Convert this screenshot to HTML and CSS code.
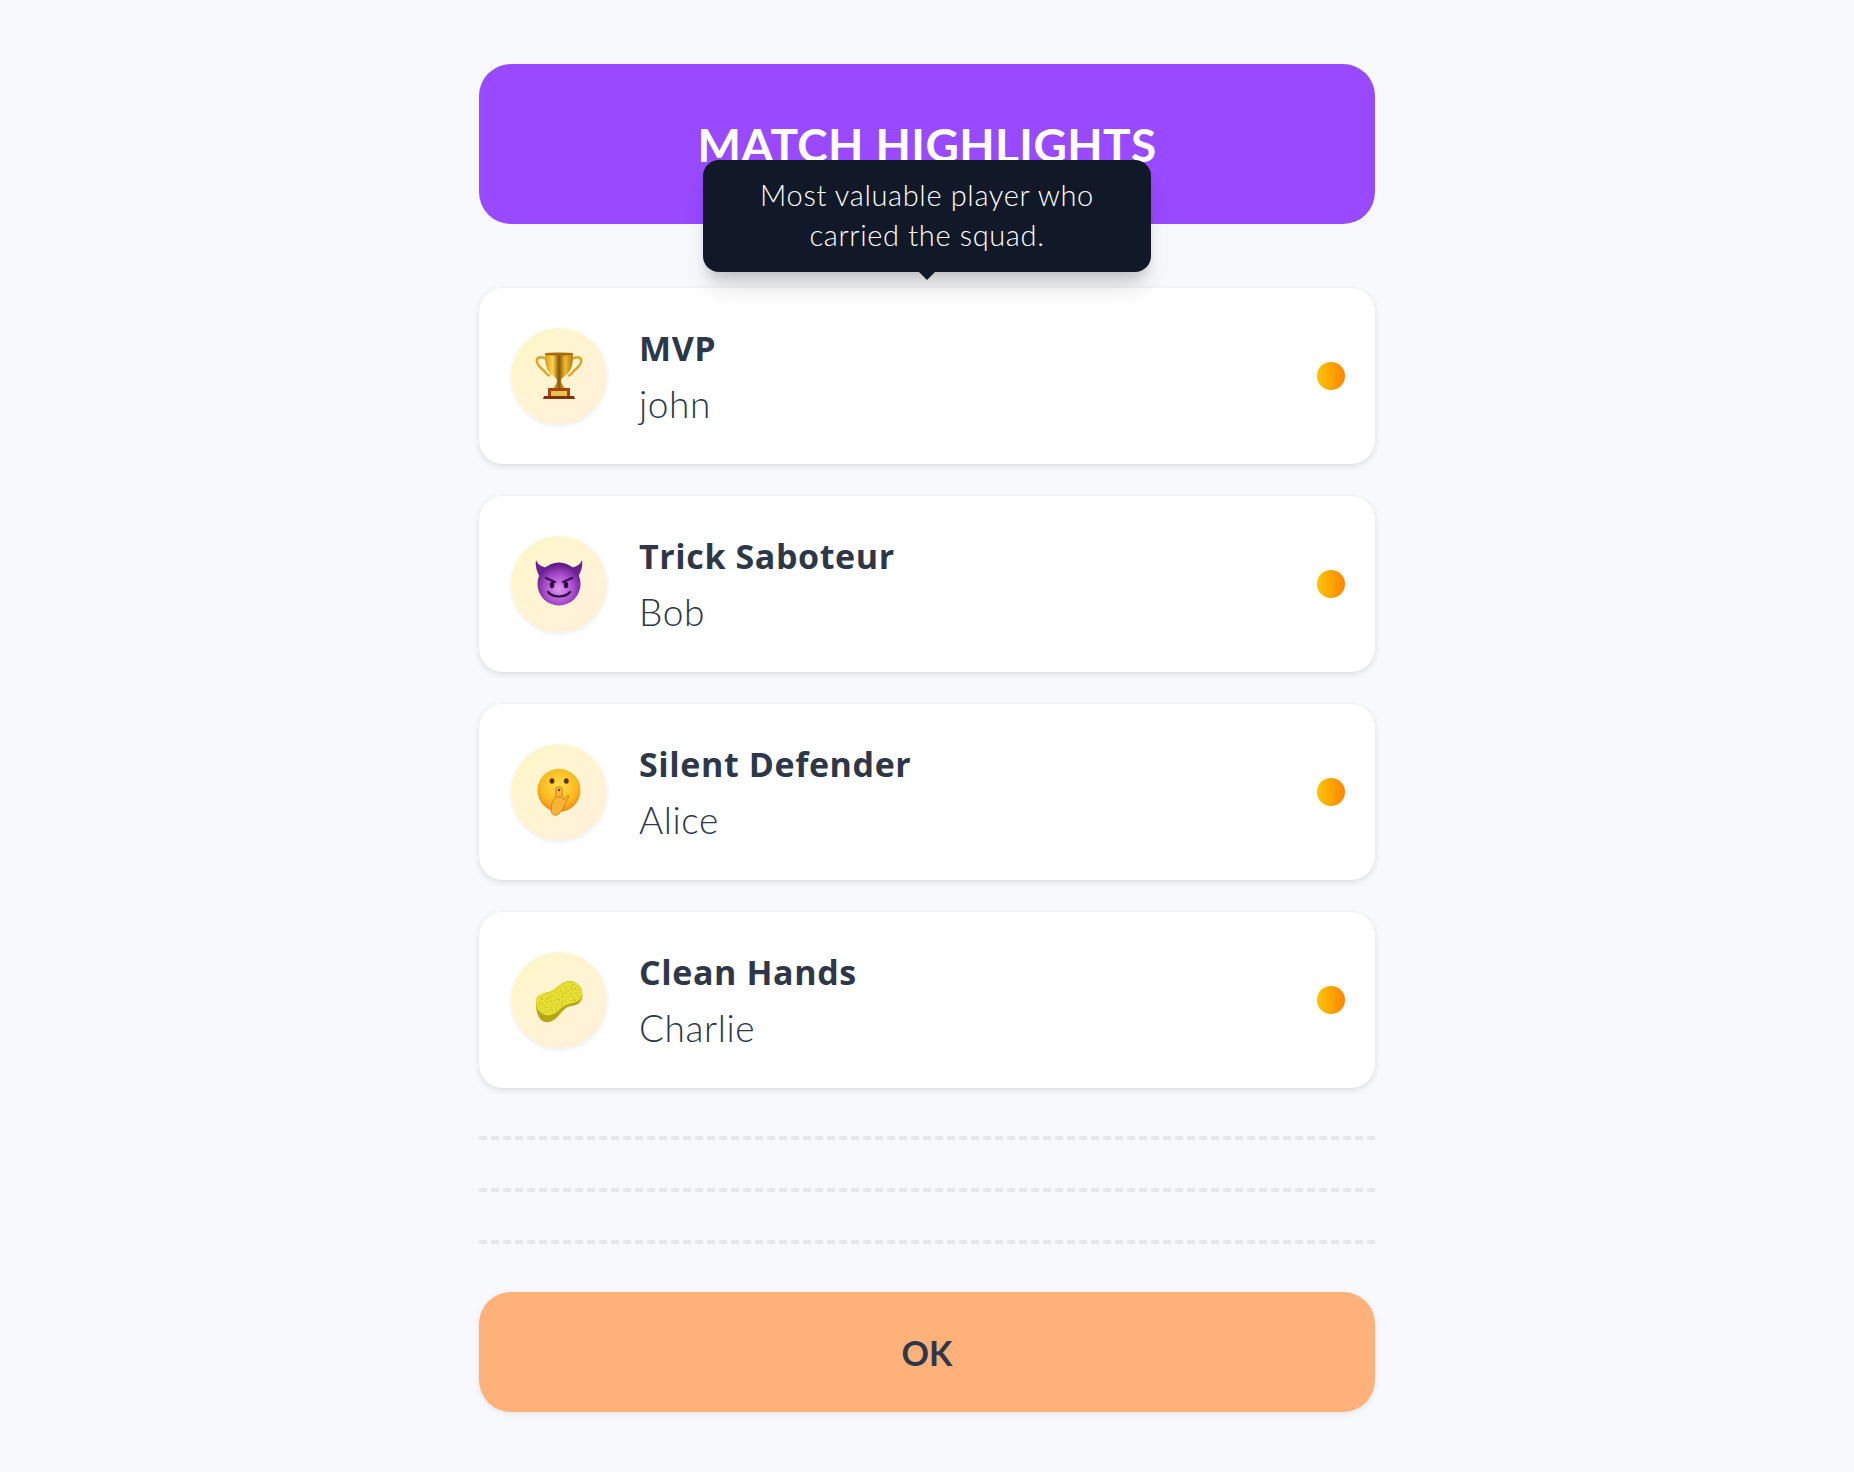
FILE: index.html
```html
<!DOCTYPE html>
<html>
<head>
    <title>Match Highlights</title>
    <link rel="stylesheet" href="styles.css">
</head>
<body>
    <main class="panel">
        <header class="banner">
            <h1>MATCH HIGHLIGHTS</h1>
        </header>

        <!-- tooltip for the hovered MVP row -->
        <div class="tip">Most valuable player who<br>carried the squad.</div>

        <ul class="awards">
            <li class="award">
                <div class="badge">
                    <svg class="emoji" viewBox="0 0 48 48">
                        <defs>
                            <linearGradient id="gold" x1="0" x2="1" y1="0" y2="0">
                                <stop offset="0" stop-color="#d9971a"/>
                                <stop offset=".28" stop-color="#f9d750"/>
                                <stop offset=".5" stop-color="#8a5506"/>
                                <stop offset=".72" stop-color="#eebb30"/>
                                <stop offset="1" stop-color="#b57a10"/>
                            </linearGradient>
                        </defs>
                        <path d="M11 7C6 4 1 5 2 10c1 5 6 7 8 10 1 2 3 3 5 4M37 7c5-3 10-2 9 3-1 5-6 7-8 10-1 2-3 3-5 4" fill="none" stroke="#dca528" stroke-width="2.4"/>
                        <path d="M10 1h28c0 11-1 18-8 23-3 2-4 3-4 5 0 3 3 5 4 7H18c1-2 4-4 4-7 0-2-1-3-4-5-7-5-8-12-8-23z" fill="url(#gold)"/>
                        <ellipse cx="24" cy="2" rx="14" ry="1.6" fill="#a36a0a"/>
                        <path d="M13 36h22v9H13z" fill="#a3470f"/>
                        <path d="M9 44h30l1 3H8z" fill="#7e330c"/>
                        <path d="M16 39h16v5H16z" fill="#edc04c"/>
                    </svg>
                </div>
                <div class="who">
                    <div class="title">MVP</div>
                    <div class="name">john</div>
                </div>
                <span class="dot"></span>
            </li>
            <li class="award">
                <div class="badge">
                    <svg class="emoji" viewBox="0 0 48 48">
                        <defs>
                            <radialGradient id="imp" cx=".5" cy=".62" r=".6">
                                <stop offset="0" stop-color="#dc98ee"/>
                                <stop offset=".6" stop-color="#a548c8"/>
                                <stop offset="1" stop-color="#5a1882"/>
                            </radialGradient>
                        </defs>
                        <path d="M1 0c2 5 6 7 12 8l-8 9C2 12 0 6 1 0zM47 0c-2 5-6 7-12 8l8 9c3-5 5-11 4-17z" fill="#6d1f96"/>
                        <circle cx="24" cy="24" r="21.5" fill="url(#imp)"/>
                        <path d="M11 18l9 4M37 18l-9 4" stroke="#3a0f55" stroke-width="2.4" stroke-linecap="round"/>
                        <ellipse cx="17" cy="25" rx="2.2" ry="3.2" fill="#2c0a44"/>
                        <ellipse cx="31" cy="25" rx="2.2" ry="3.2" fill="#2c0a44"/>
                        <path d="M13 32c5 6 17 6 22 0" fill="none" stroke="#2c0a44" stroke-width="2.2" stroke-linecap="round"/>
                    </svg>
                </div>
                <div class="who">
                    <div class="title">Trick Saboteur</div>
                    <div class="name">Bob</div>
                </div>
                <span class="dot"></span>
            </li>
            <li class="award">
                <div class="badge">
                    <svg class="emoji" viewBox="0 0 48 48">
                        <defs>
                            <radialGradient id="face" cx=".5" cy=".4" r=".6">
                                <stop offset="0" stop-color="#ffdf4a"/>
                                <stop offset=".7" stop-color="#fbb820"/>
                                <stop offset="1" stop-color="#ee8a12"/>
                            </radialGradient>
                        </defs>
                        <circle cx="24" cy="22.3" r="21.5" fill="url(#face)"/>
                        <ellipse cx="17" cy="13" rx="2.4" ry="2.8" fill="#5a3208"/>
                        <ellipse cx="31.3" cy="13" rx="2.4" ry="2.8" fill="#5a3208"/>
                        <path d="M20.7 21c0-3 6.5-3 6.5 0v8c1 1 1.5 2 1.5 3l4-4.5c1-.5 1.5.5 1 1.5l-4 8c-2 5-5 9-8 10-3 1-5-1-5.5-4-.5-5 1-10 4.5-14z" fill="#f8b236" stroke="#c97a14" stroke-width=".8"/>
                        <path d="M20.7 29h6" stroke="#c97a14" stroke-width=".8"/>
                        <ellipse cx="24" cy="22" rx="1" ry="1.2" fill="#5a3208"/>
                    </svg>
                </div>
                <div class="who">
                    <div class="title">Silent Defender</div>
                    <div class="name">Alice</div>
                </div>
                <span class="dot"></span>
            </li>
            <li class="award">
                <div class="badge">
                    <svg class="emoji" viewBox="0 0 48 48">
                        <defs>
                            <filter id="grain" x="0" y="0" width="100%" height="100%">
                                <feTurbulence type="fractalNoise" baseFrequency="0.7" numOctaves="2" seed="4"/>
                                <feColorMatrix values="0 0 0 0 .45  0 0 0 0 .38  0 0 0 0 0  1.6 0 0 0 -.62"/>
                                <feComposite in2="SourceGraphic" operator="in"/>
                                <feMerge>
                                    <feMergeNode in="SourceGraphic"/>
                                    <feMergeNode/>
                                </feMerge>
                            </filter>
                        </defs>
                        <g filter="url(#grain)">
                            <path d="M1 26c0-6 7-9 13-10 6-2 9-7 16-10 7-3 16 2 17 10 1 4 0 8-2 10-2 3-5 3-9 4-5 1-8 4-11 8-4 5-9 9-15 8-6-1-9-9-9-20z" fill="#b3a81e"/>
                            <path d="M1 25C1 19 8 17 14 16 20 14 23 9 30 6 37 3 46 8 47 16 48 22 44 26 38 27 32 28 28 30 24 34 19 39 13 41 8 38 3 36 1 30 1 25z" fill="#eee53a"/>
                        </g>
                    </svg>
                </div>
                <div class="who">
                    <div class="title">Clean Hands</div>
                    <div class="name">Charlie</div>
                </div>
                <span class="dot"></span>
            </li>
        </ul>

        <div class="rules">
            <div class="rule"></div>
            <div class="rule"></div>
            <div class="rule"></div>
        </div>

        <button class="ok">OK</button>
    </main>
</body>
</html>
```
FILE: styles.css
```css
body {
    margin: 0;
    padding: 64px 0 60px;
    background-color: #f8f9fd;
    font-family: "Lato", "Open Sans", sans-serif;
    color: #2d3748;
}

.panel {
    position: relative;
    width: 896px;
    margin: 0 auto;
}

.banner {
    height: 160px;
    border-radius: 32px;
    background-color: #9949ff;
    display: flex;
    align-items: center;
    justify-content: center;
}

.banner h1 {
    margin: 0;
    color: white;
    font-size: 46px;
    font-weight: 700;
    letter-spacing: 0.4px;
}

/* sits over the banner, centred on the panel */
.tip {
    position: absolute;
    z-index: 2;
    top: 96px;
    left: 224px;
    width: 448px;
    height: 112px;
    box-sizing: border-box;
    padding: 15px 0;
    border-radius: 16px;
    background-color: #111827;
    box-shadow: 0 20px 25px -5px rgba(0, 0, 0, 0.12), 0 10px 12px -4px rgba(0, 0, 0, 0.12);
    color: white;
    font-size: 29px;
    font-weight: 300;
    letter-spacing: 0.65px;
    line-height: 40px;
    text-align: center;
}

.tip::after {
    content: "";
    position: absolute;
    left: 216px;
    bottom: -8px;
    border-top: 8px solid #111827;
    border-left: 8px solid transparent;
    border-right: 8px solid transparent;
}

.awards {
    list-style: none;
    margin: 64px 0 0;
    padding: 0;
    display: flex;
    flex-direction: column;
    gap: 32px;
}

.award {
    height: 176px;
    box-sizing: border-box;
    padding: 0 30px 0 32px;
    border-radius: 24px;
    background-color: white;
    box-shadow: 0 2px 6px rgba(0, 0, 0, 0.12);
    display: flex;
    align-items: center;
    gap: 32px;
}

.badge {
    width: 96px;
    height: 96px;
    flex-shrink: 0;
    border-radius: 50%;
    background: linear-gradient(135deg, #fff7c9, #fff0dc);
    box-shadow: 0 2px 4px rgba(0, 0, 0, 0.08);
    display: flex;
    align-items: center;
    justify-content: center;
}

.emoji {
    width: 48px;
    height: 48px;
}

.who {
    flex: 1;
    margin-top: -1px;
}

.title {
    font-family: "Open Sans", sans-serif;
    font-size: 34px;
    font-weight: 700;
    letter-spacing: 0.6px;
    line-height: 48px;
}

.name {
    margin-top: 8px;
    font-size: 37px;
    font-weight: 300;
    letter-spacing: 0.6px;
    line-height: 48px;
}

.dot {
    width: 28px;
    height: 28px;
    border-radius: 50%;
    background: linear-gradient(90deg, #ffc400, #ff8500);
}

.rules {
    margin-top: 48px;
    display: flex;
    flex-direction: column;
    gap: 48px;
}

.rule {
    border-top: 4px dashed #e5e7eb;
}

.ok {
    display: block;
    width: 100%;
    height: 120px;
    margin-top: 48px;
    border: none;
    border-radius: 32px;
    background-color: #ffb17a;
    box-shadow: 0 2px 6px rgba(0, 0, 0, 0.08);
    color: #2d3748;
    font-family: inherit;
    font-size: 34px;
    font-weight: 700;
}
```
